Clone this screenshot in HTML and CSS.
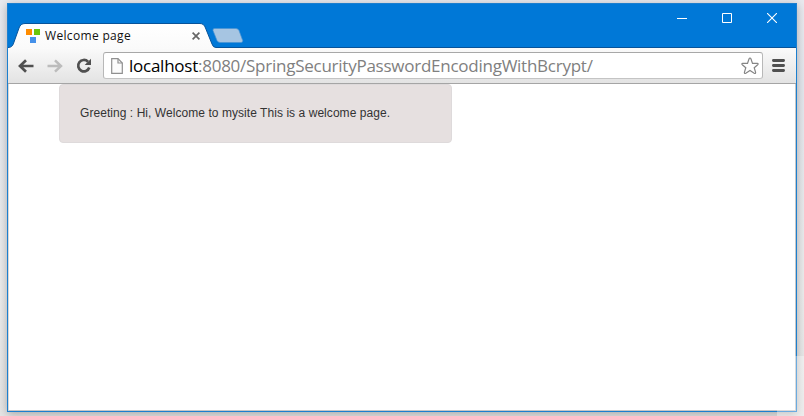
FILE: index.html
```
<!DOCTYPE html>
<html lang="en">
<head>
<meta charset="utf-8">
<title>Welcome page</title>
<link rel="stylesheet" href="styles.css">
</head>
<body>
<div class="window">
  <header class="titlebar">
    <div class="tabs">
      <div class="tab">
        <svg class="tab-shape" width="208" height="26" viewBox="0 0 208 26">
          <defs><linearGradient id="tabfill" x1="0" y1="0" x2="0" y2="1"><stop offset="0" stop-color="#fff"/><stop offset="1" stop-color="#fafafa"/></linearGradient></defs>
          <path d="M0 26V24.500C4 24.500 5 22 6 19L11 5Q12.500 .5 17 .5H192Q196 .5 197.500 5L204 21Q205 24.500 208 24.500V26Z" fill="url(#tabfill)"/>
          <path d="M0 24.500C4 24.500 5 22 6 19L11 5Q12.500 .5 17 .5H192Q196 .5 197.500 5L204 21Q205 24.500 208 24.500" fill="none" stroke="#07539a"/>
        </svg>
        <svg class="favicon" width="14" height="14" viewBox="0 0 14 14"><path fill="#ff8c00" d="M0 0h6v6H0z"/><path fill="#6bc60c" d="M8 0h6v6H8z"/><path fill="#4591ea" d="M4 8h6v6H4z"/></svg>
        <span class="tab-title">Welcome page</span>
        <svg class="tab-close" width="8" height="8" viewBox="0 0 8 8"><path d="M.6.600l6.800 6.800M7.400.6L.6 7.400" stroke="#666" stroke-width="1.700"/></svg>
      </div>
      <svg class="new-tab" width="32" height="15" viewBox="0 0 32 15"><path d="M2.500.5H24Q26 .5 27 2.500L30.700 12.500Q31 14.500 29 14.500H8Q6 14.500 5 12.500L1 2.500Q.5.5 2.500.5Z" fill="#a6c5e2" stroke="#4a94d3" stroke-width=".7"/></svg>
    </div>
    <div class="controls">
      <svg width="10" height="10" viewBox="0 0 10 10"><path d="M0 5.500h10" stroke="#fff"/></svg>
      <svg width="10" height="10" viewBox="0 0 10 10"><path d="M.5.5h9v9h-9z" fill="none" stroke="#fff"/></svg>
      <svg width="10" height="10" viewBox="0 0 10 10"><path d="M0 0l10 10M10 0L0 10" stroke="#fff" stroke-width="1.100"/></svg>
    </div>
  </header>
  <nav class="toolbar">
    <svg class="back" width="16" height="14" viewBox="0 0 16 14"><path d="M2 7h13.500M8 1.300L2 7l6 5.700" fill="none" stroke="#505050" stroke-width="2.700"/></svg>
    <svg class="forward" width="16" height="14" viewBox="0 0 16 14"><path d="M14 7H.5M8 1.300L14 7l-6 5.700" fill="none" stroke="#bcbcbc" stroke-width="2.500"/></svg>
    <svg class="reload" width="16" height="16" viewBox="0 0 16 16"><path d="M13.300 9.500A5.700 5.700 0 1 1 12 3.700" fill="none" stroke="#505050" stroke-width="2.700"/><path d="M15 .7V7H8.700Z" fill="#505050"/></svg>
    <div class="address">
      <svg class="page-icon" width="12" height="16" viewBox="0 0 12 16"><path d="M.7.700H7L11.300 5v10.300H.7Z" fill="#fcfcfc" stroke="#909090" stroke-width="1.200"/><path d="M7 .7V5h4.300" fill="none" stroke="#909090" stroke-width="1.200"/></svg>
      <span class="url"><b>localhost</b>:8080/SpringSecurityPasswordEncodingWithBcrypt/</span>
      <svg class="star" width="18" height="18" viewBox="0 0 18 18"><path d="M9 1Q9.600 1 10 2L11.500 6.400H16.300Q17.800 6.600 16.700 7.700L13.200 10.700L14.600 15.400Q14.700 17 13.200 16.300L9 13.500L4.800 16.300Q3.300 17 3.400 15.400L4.800 10.700L1.300 7.700Q.2 6.600 1.700 6.400H6.500L8 2Q8.400 1 9 1Z" fill="#fff" stroke="#858585" stroke-width="1.200"/></svg>
    </div>
    <svg class="menu" width="13" height="13" viewBox="0 0 13 13"><path d="M1.400 1.500h10.200M1.400 6.500h10.200M1.400 11.500h10.200" stroke="#505050" stroke-width="2.800" stroke-linecap="round"/></svg>
  </nav>
  <main class="page">
    <div class="greeting">Greeting : Hi, Welcome to mysite This is a welcome page.</div>
  </main>
</div>
<div class="corner"></div>
</body>
</html>
```
FILE: styles.css
```
* { box-sizing: border-box; }
body {
  margin: 0;
  width: 804px;
  height: 416px;
  padding: 3px 0 0 7px;
  overflow: hidden;
  position: relative;
  background: linear-gradient(180deg, #e9eaef, #e4e7ed 20%, #ececec 70%, #e5e5e5);
}
svg { display: block; flex: none; }
.corner {
  position: absolute;
  left: 777px;
  top: 356px;
  width: 27px;
  height: 60px;
  background: rgba(255, 255, 255, .35);
}
.window {
  position: relative;
  width: 790px;
  height: 409px;
  display: flex;
  flex-direction: column;
  border: 1px solid #1c7fcf;
  background: #fff;
  box-shadow: 0 2px 9px rgba(0, 0, 0, .28);
}
.titlebar {
  height: 44px;
  flex: none;
  display: flex;
  justify-content: space-between;
  background: #0078d7;
  border-bottom: 1px solid #07539a;
}
.tabs { display: flex; align-items: flex-start; padding-top: 19px; }
.tab {
  position: relative;
  width: 208px;
  height: 25px;
  display: flex;
  align-items: center;
  padding-left: 18px;
}
.tab-shape { position: absolute; left: 0; top: 0; }
.favicon { position: relative; margin-top: 1px; }
.tab-title {
  position: relative;
  width: 147px;
  margin-left: 5px;
  font: 12px/16px "Open Sans", "Noto Sans", sans-serif;
  letter-spacing: .33px;
  color: #111;
}
.tab-close { position: relative; }
.new-tab { margin: 5px 0 0 -4px; }
.controls { display: flex; gap: 35px; padding: 9px 19px 0 0; }
.toolbar {
  height: 36px;
  flex: none;
  display: flex;
  align-items: center;
  padding: 0 11px 0 10px;
  background: linear-gradient(#fafafa, #e3e3e3);
  border-bottom: 1px solid #a5a5a5;
}
.forward { margin-left: 13px; }
.reload { margin-left: 13px; }
.address {
  width: 660px;
  height: 27px;
  margin: 0 9px 0 11px;
  display: flex;
  align-items: center;
  padding: 0 3px 0 7px;
  border: 1px solid #b0b0b0;
  border-color: #a8a8a8 #b8b8b8 #c4c4c4;
  border-radius: 3px;
  background: #fff;
}
.url {
  flex: 1;
  margin-left: 6px;
  font: 17px/24px "Open Sans", "Noto Sans", sans-serif;
  letter-spacing: -.25px;
  white-space: nowrap;
  color: #808080;
}
.url b { font-weight: 400; color: #000; }
.page {
  flex: 1;
  padding-left: 51px;
  border-left: 1px solid #d8d8d8;
  border-right: 1px solid #c6c6c6;
  border-bottom: 1px solid #c6c6c6;
  padding-left: 50px;
}
.greeting {
  width: 393px;
  height: 59px;
  padding: 19px 20px;
  border: 1px solid #dedadb;
  border-radius: 4px;
  background: #e6e0e0;
  font: 12px/18px "Liberation Sans", Arial, sans-serif;
  letter-spacing: .055px;
  color: #333;
}
```
